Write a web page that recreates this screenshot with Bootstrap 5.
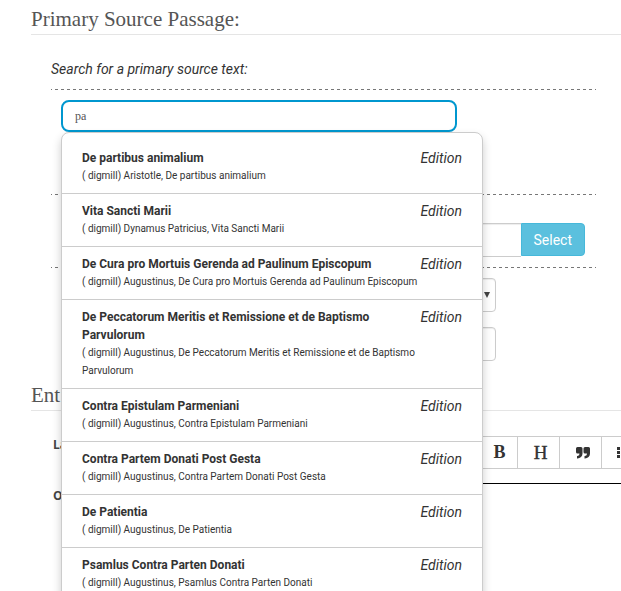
<!DOCTYPE html>
<html lang="en">
<head>
<meta charset="utf-8">
<meta name="viewport" content="width=device-width, initial-scale=1">
<title>Primary Source Passage</title>
<link href="https://cdn.jsdelivr.net/npm/bootstrap@5.3.0/dist/css/bootstrap.min.css" rel="stylesheet">
<style>
body { font-family: Roboto, "Liberation Sans", sans-serif; font-size: 14px; line-height: 20px; color: #333; background: #fff; }
.page { height: 100vh; padding-left: 31px; }
.section-title { font-family: "Liberation Serif", serif; font-size: 21px; line-height: 24px; color: #555; border-bottom: 1px solid #e5e5e5; margin: 0; padding: 7px 0 3px; }
.source { margin: 24px 25px 0 20px; }
.search-label { padding-bottom: 10px; }
.dashed { height: 1px; background: repeating-linear-gradient(90deg, #777 0 1px, transparent 1px 4px, #777 4px 6px); }
.search-area { height: 104px; padding: 10px 139px 0 10px; }
.search-box { height: 32px; border: 2px solid #0097cf; border-radius: 8px; font: 12px/16px "Liberation Serif", serif; color: #555; padding: 2px 12px; }
.search-box:focus { border-color: #0097cf; box-shadow: none; color: #555; }
.suggestions { top: 42px; left: 10px; width: 422px; z-index: 10; background: #fff; border: 1px solid #ccc; border-radius: 8px; padding: 8px 0; box-shadow: 0 5px 10px rgba(0,0,0,.2); margin: 0; }
.suggestions li + li { border-top: 1px solid #ccc; }
.suggestion { padding: 8px 20px; color: #333; text-decoration: none; }
.suggestion strong { font-size: 12px; line-height: 18px; font-weight: 700; }
.suggestion small { font-size: 10px; line-height: 18px; }
.suggestion em { line-height: 18px; }
.select-row { padding: 28px 11px 10px 10px; }
.field { height: 34px; border: 1px solid #ccc; border-radius: 4px; font-size: 14px; box-shadow: inset 0 1px 1px rgba(0,0,0,.075); }
.btn-pick { height: 33px; font-size: 14px; line-height: 20px; padding: 5px 12px; color: #fff; background: #5bc0de; border: 1px solid #46b8da; border-radius: 0 4px 4px 0; }
.details { padding: 10px 100px 0 10px; gap: 15px; }
.arrow-select { appearance: none; padding: 0 20px 0 12px; background: #fff url("data:image/svg+xml,%3Csvg xmlns='http://www.w3.org/2000/svg' width='6' height='6'%3E%3Cpath d='M0 0h6L3 6z' fill='%23444'/%3E%3C/svg%3E") no-repeat right 5px center; }
.entry-title { margin-top: 15px; }
.editor { margin-top: 25px; padding-left: 22px; gap: 14px; }
.editor-label { width: 48px; font: 700 12px/18px "Open Sans", sans-serif; color: #444; }
.tools { border: 1px solid #ccc; border-right: 0; height: 33px; min-width: 0; padding-left: 380px; }
.tools button { flex: 0 0 42px; border: 0; border-right: 1px solid #ccc; background: #fff; padding: 0; font: 700 18px/31px "Liberation Serif", serif; color: #333; }
.tools button:first-child { flex-basis: 36px; }
.tools .heading-tool { font-weight: 400; font-size: 19px; padding-left: 4px; -webkit-text-stroke: 0.4px #333; }
.tools svg { display: block; margin: 0 auto; }
.tools .quote-tool { padding-left: 4px; }
.text-area { border: 0; border-top: 1px solid #000; border-radius: 0; height: 60px; resize: none; padding: 8px; }
</style>
</head>
<body>
<main class="page overflow-hidden">
  <h2 class="section-title">Primary Source Passage:</h2>
  <section class="source">
    <label for="search" class="search-label d-block fst-italic">Search for a primary source text:</label>
    <div class="dashed"></div>
    <div class="search-area position-relative">
      <input id="search" class="form-control search-box" type="text" value="pa" autocomplete="off">
      <ul class="suggestions position-absolute list-unstyled">
        <li><a href="#" class="suggestion d-flex"><span class="flex-fill"><strong class="d-block">De partibus animalium</strong><small class="d-block">( digmill) Aristotle, De partibus animalium</small></span><em>Edition</em></a></li>
        <li><a href="#" class="suggestion d-flex"><span class="flex-fill"><strong class="d-block">Vita Sancti Marii</strong><small class="d-block">( digmill) Dynamus Patricius, Vita Sancti Marii</small></span><em>Edition</em></a></li>
        <li><a href="#" class="suggestion d-flex"><span class="flex-fill"><strong class="d-block">De Cura pro Mortuis Gerenda ad Paulinum Episcopum</strong><small class="d-block">( digmill) Augustinus, De Cura pro Mortuis Gerenda ad Paulinum Episcopum</small></span><em>Edition</em></a></li>
        <li><a href="#" class="suggestion d-flex"><span class="flex-fill"><strong class="d-block">De Peccatorum Meritis et Remissione et de Baptismo Parvulorum</strong><small class="d-block">( digmill) Augustinus, De Peccatorum Meritis et Remissione et de Baptismo Parvulorum</small></span><em>Edition</em></a></li>
        <li><a href="#" class="suggestion d-flex"><span class="flex-fill"><strong class="d-block">Contra Epistulam Parmeniani</strong><small class="d-block">( digmill) Augustinus, Contra Epistulam Parmeniani</small></span><em>Edition</em></a></li>
        <li><a href="#" class="suggestion d-flex"><span class="flex-fill"><strong class="d-block">Contra Partem Donati Post Gesta</strong><small class="d-block">( digmill) Augustinus, Contra Partem Donati Post Gesta</small></span><em>Edition</em></a></li>
        <li><a href="#" class="suggestion d-flex"><span class="flex-fill"><strong class="d-block">De Patientia</strong><small class="d-block">( digmill) Augustinus, De Patientia</small></span><em>Edition</em></a></li>
        <li><a href="#" class="suggestion d-flex"><span class="flex-fill"><strong class="d-block">Psamlus Contra Parten Donati</strong><small class="d-block">( digmill) Augustinus, Psamlus Contra Parten Donati</small></span><em>Edition</em></a></li>
      </ul>
    </div>
    <div class="dashed"></div>
    <div class="select-row d-flex">
      <input class="field form-control rounded-end-0 border-end-0" type="text" aria-label="Selected text">
      <button type="button" class="btn-pick">Select</button>
    </div>
    <div class="dashed"></div>
    <div class="details d-flex flex-column">
      <select class="field arrow-select w-100" aria-label="Type"><option></option></select>
      <input class="field form-control" type="text" aria-label="Reference">
    </div>
  </section>
  <h2 class="section-title entry-title">Ent</h2>
  <section class="editor d-flex flex-column">
    <div class="d-flex">
      <span class="editor-label flex-shrink-0">La</span>
      <div class="tools d-flex flex-fill overflow-hidden" role="toolbar" aria-label="Formatting">
        <button type="button" aria-label="Bold">B</button>
        <button type="button" class="heading-tool" aria-label="Heading">H</button>
        <button type="button" class="quote-tool" aria-label="Quote"><svg width="14" height="12" viewBox="0 0 14 12" fill="#333"><path d="M1.500 0h3.500A1.500 1.500 0 0 1 6.500 1.500V6.500A5 5 0 0 1 1.500 11.500H1V9h.5A2.300 2.300 0 0 0 3.500 6.500H1.500A1.500 1.500 0 0 1 0 5V1.500A1.500 1.500 0 0 1 1.500 0zM9 0h3.500A1.500 1.500 0 0 1 14 1.500V6.500A5 5 0 0 1 9 11.500H8.500V9h.5A2.300 2.300 0 0 0 11 6.500H9A1.500 1.500 0 0 1 7.500 5V1.500A1.500 1.500 0 0 1 9 0z"/></svg></button>
        <button type="button" aria-label="List"><svg width="14" height="12" viewBox="0 0 14 12" fill="#333"><path d="M1 0h3v3H1zM1 4h3v3H1zM1 8h3v3H1zM6 1h8v2H6zM6 5h8v2H6zM6 9h8v2H6z"/></svg></button>
      </div>
    </div>
    <div class="d-flex">
      <label for="original" class="editor-label flex-shrink-0 pt-1">O</label>
      <textarea id="original" class="text-area flex-fill"></textarea>
    </div>
  </section>
</main>
<script src="https://cdn.jsdelivr.net/npm/bootstrap@5.3.0/dist/js/bootstrap.bundle.min.js"></script>
</body>
</html>
